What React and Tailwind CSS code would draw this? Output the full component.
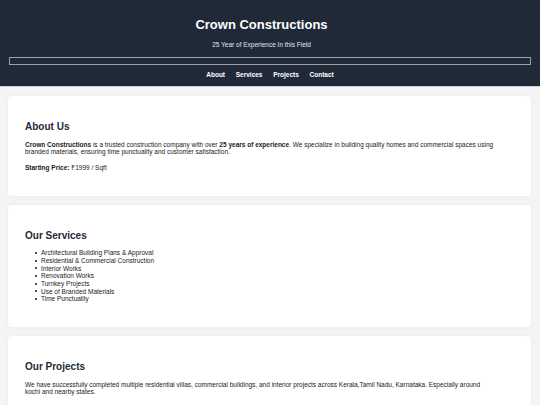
import React from "react";

const services = [
    "Architectural Building Plans & Approval",
    "Residential & Commercial Construction",
    "Interior Works",
    "Renovation Works",
    "Turnkey Projects",
    "Use of Branded Materials",
    "Time Punctuality",
];

const Card = ({ title, children }) => (
    <section className="bg-white rounded-[4px] shadow-[0_0_4px_rgba(0,0,0,0.04)] pl-[17px] pr-[35.5px] pt-[25px] pb-[24px]">
        <h2 className="text-[10px] leading-[11.5px] font-bold text-[#1f2937] mb-[8px]">{title}</h2>
        {children}
    </section>
);

export default function App() {
    return (
        <div className="min-h-[405px] bg-[#f4f4f4] font-['Liberation_Sans',Arial,sans-serif] text-[6.5px] leading-[7.7px] text-[#1a1a1a]">
            <header className="bg-[#1f2937] border-b border-[#c9d1dc] flex flex-col items-center pt-[17px] pb-[8px]">
                <div className="self-stretch flex flex-col items-center pr-[17px]">
                    <h1 className="text-[13px] leading-[15px] font-bold text-white">Crown Constructions</h1>
                    <p className="mt-[9px] text-[#e5e7eb] text-[6.5px] leading-[7.5px]">25 Year of Experience In this Field</p>
                </div>
                <div className="mt-[8px] self-stretch ml-[9px] mr-[9px] h-[8px] border border-[#9aa3ae]" />
                <nav className="mt-[6px] flex gap-[10.7px] font-bold text-white text-[6.5px] leading-[7.5px]">
                    <a href="#about">About</a>
                    <a href="#services">Services</a>
                    <a href="#projects">Projects</a>
                    <a href="#contact">Contact</a>
                </nav>
            </header>
            <main className="flex flex-col gap-[9px] pt-[9px] pl-[8px] pr-[9px]">
                <Card title="About Us">
                    <p>
                        <strong>Crown Constructions</strong> is a trusted construction company with over <strong>25 years of experience</strong>. We specialize in building quality homes and commercial spaces using branded materials, ensuring time punctuality and customer satisfaction.
                    </p>
                    <p className="mt-[8px]">
                        <strong>Starting Price:</strong> ₹1999 / Sqft
                    </p>
                </Card>
                <Card title="Our Services">
                    <ul className="pl-[10px]">
                        {services.map((s) => (
                            <li key={s} className="flex items-center">
                                <span className="w-[2px] h-[2px] rounded-full bg-[#1a1a1a] mr-[4px] shrink-0" />
                                {s}
                            </li>
                        ))}
                    </ul>
                </Card>
                <Card title="Our Projects">
                    <p>
                        We have successfully completed multiple residential villas, commercial buildings, and interior projects across Kerala,Tamil Nadu, Karnataka. Especially around kochi and nearby states.
                    </p>
                </Card>
            </main>
        </div>
    );
}
